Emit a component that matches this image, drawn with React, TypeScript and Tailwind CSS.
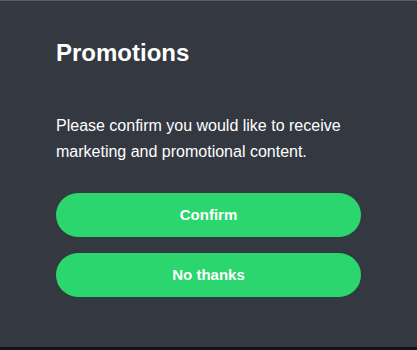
export default function App() {
  return (
    <div className="w-[417px] h-[350px] flex flex-col bg-[#111315]" style={{ fontFamily: '"Liberation Sans", Arial, sans-serif' }}>
      <div className="h-px bg-[#5a5d63]" />
      <div className="h-[346px] bg-[#343841] px-[56px] pt-[38px] flex flex-col">
        <h1 className="text-[24px] leading-[28px] font-bold text-white">Promotions</h1>
        <p className="mt-[46px] text-[16px] leading-[26px] text-white">
          Please confirm you would like to receive marketing and promotional content.
        </p>
        <div className="mt-[28px] flex flex-col gap-[16px]">
          <button className="h-[44px] w-full rounded-full bg-[#2bd66e] text-white text-[15px] font-bold">Confirm</button>
          <button className="h-[44px] w-full rounded-full bg-[#2bd66e] text-white text-[15px] font-bold">No thanks</button>
        </div>
      </div>
    </div>
  );
}
